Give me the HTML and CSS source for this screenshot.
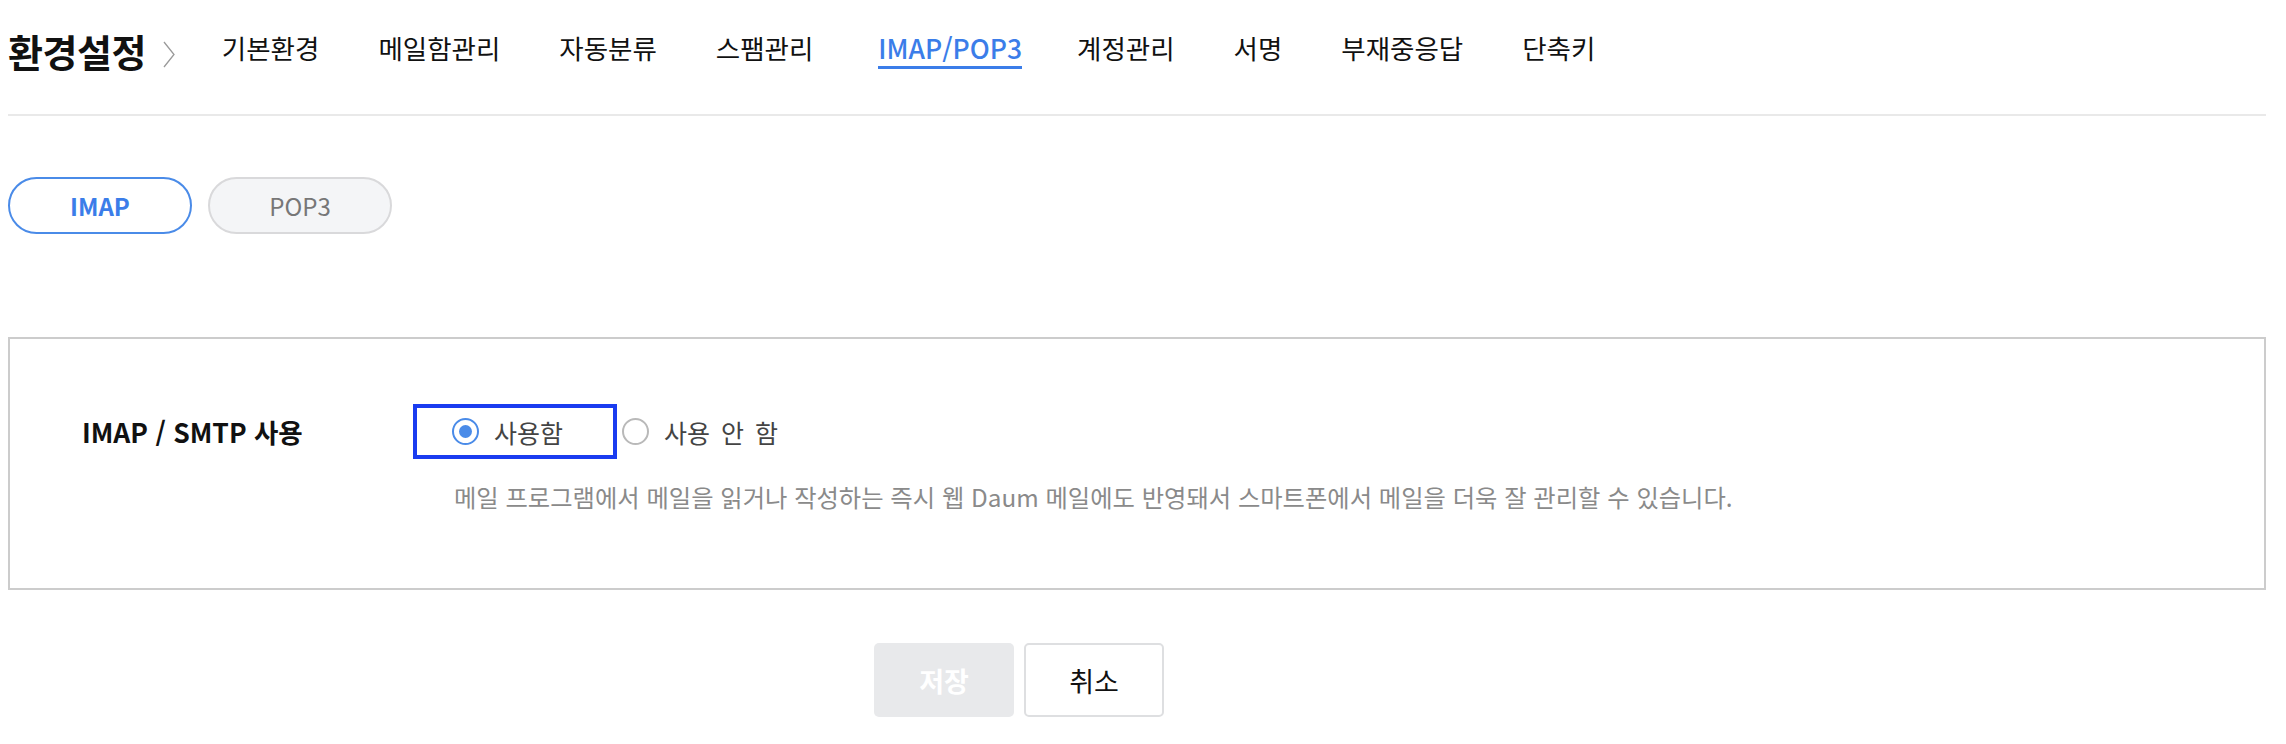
FILE: index.html
```html
<!DOCTYPE html>
<html lang="ko">
<head>
<meta charset="utf-8">
<title>환경설정 - IMAP/POP3</title>
<link rel="stylesheet" href="styles.css">
</head>
<body>
<div class="page">
  <header class="header">
    <h1 class="title">환경설정</h1>
    <svg class="chevron" width="12" height="27" viewBox="0 0 12 27"><polyline points="1,1 11,13.5 1,26" fill="none" stroke="#9a9a9a" stroke-width="1.3"/></svg>
    <nav class="nav">
      <a class="nav-item">기본환경</a>
      <a class="nav-item">메일함관리</a>
      <a class="nav-item">자동분류</a>
      <a class="nav-item">스팸관리</a>
      <a class="nav-item active">IMAP/POP3</a>
      <a class="nav-item">계정관리</a>
      <a class="nav-item">서명</a>
      <a class="nav-item">부재중응답</a>
      <a class="nav-item">단축키</a>
    </nav>
  </header>

  <div class="tabs">
    <button class="pill selected">IMAP</button>
    <button class="pill">POP3</button>
  </div>

  <section class="box">
    <div class="row">
      <div class="label">IMAP / SMTP 사용</div>
      <div class="options">
        <label class="opt focused"><span class="radio checked"></span><span class="opt-text">사용함</span></label>
        <label class="opt"><span class="radio"></span><span class="opt-text">사용 안 함</span></label>
      </div>
    </div>
    <p class="desc">메일 프로그램에서 메일을 읽거나 작성하는 즉시 웹 Daum 메일에도 반영돼서 스마트폰에서 메일을 더욱 잘 관리할 수 있습니다.</p>
  </section>

  <div class="actions">
    <button class="btn save">저장</button>
    <button class="btn cancel">취소</button>
  </div>
</div>
</body>
</html>
```
FILE: styles.css
```css
* { box-sizing: border-box; }
html, body { margin: 0; padding: 0; background: #fff; }
body {
  font-family: "Noto Sans CJK KR", "Noto Sans", sans-serif;
  color: #111;
}
.page { padding: 0 20px 0 8px; }

.header {
  display: flex;
  align-items: flex-start;
  height: 116px;
  padding-top: 27px;
  border-bottom: 2px solid #e9e9e9;
}
.title {
  margin: 0;
  font-size: 38px;
  font-weight: 700;
  line-height: 48px;
  letter-spacing: -0.5px;
  color: #111;
}
.chevron { margin: 14px 0 0 17px; flex: none; }
.nav { display: flex; gap: 59px; margin-left: 47px; margin-top: 3px; }
.nav-item {
  font-size: 26.5px;
  line-height: 36px;
  padding-bottom: 0;
  border-bottom: 3px solid transparent;
  color: #111;
  white-space: nowrap;
}
.nav-item.active { color: #3b7de9; border-bottom-color: #3b7de9; font-weight: 500; margin-left: 6px; margin-right: -4px; }

.tabs { display: flex; gap: 16px; margin-top: 61px; }
.pill {
  width: 184px;
  height: 57px;
  border-radius: 29px;
  font-family: inherit;
  font-size: 24px;
  border: 2px solid #d9d9db;
  background: #f4f5f7;
  color: #777;
}
.pill.selected { border-color: #4a8be8; background: #fff; color: #3b7de9; font-weight: 700; }

.box {
  margin-top: 103px;
  border: 2px solid #cccccc;
  height: 253px;
  padding: 65px 0 0 72px;
}
.row { display: flex; align-items: center; }
.label { width: 331px; font-size: 26.5px; font-weight: 700; color: #111; }
.options { display: flex; align-items: center; gap: 5px; }
.opt { display: flex; align-items: center; gap: 15px; font-size: 25px; color: #444; word-spacing: 4px; }
.opt.focused { border: 4px solid #1a3cf0; height: 55px; padding: 0 50px 0 35px; }
.radio {
  width: 27px; height: 27px; border-radius: 50%;
  border: 2px solid #b9b9b9;
  display: flex; align-items: center; justify-content: center;
}
.radio.checked { border-color: #4a8be8; }
.radio.checked::after { content: ""; width: 13px; height: 13px; border-radius: 50%; background: #4a8be8; }
.desc {
  margin: 21px 0 0 372px;
  font-size: 24.3px;
  line-height: 34px;
  color: #8a8a8a;
}

.actions { display: flex; gap: 10px; margin: 53px 0 0 866px; }
.btn {
  width: 140px; height: 74px;
  border-radius: 5px;
  font-family: inherit;
  font-size: 27px;
}
.btn.save { background: #e8e9eb; border: none; color: #fff; font-weight: 700; }
.btn.cancel { background: #fff; border: 2px solid #dedfe1; color: #111; }
```
